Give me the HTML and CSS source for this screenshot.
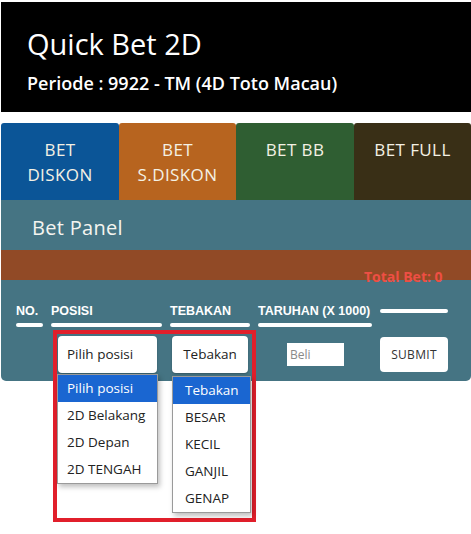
FILE: index.html
```html
<!DOCTYPE html>
<html lang="id">
<head>
<meta charset="utf-8">
<title>Quick Bet 2D</title>
<link rel="stylesheet" href="styles.css">
</head>
<body>
<div class="page">
  <header class="header">
    <h1 class="title">Quick Bet 2D</h1>
    <p class="periode">Periode : 9922 - TM (4D Toto Macau)</p>
  </header>

  <nav class="tabs">
    <div class="tab tab-blue">BET<br>DISKON</div>
    <div class="tab tab-orange">BET<br>S.DISKON</div>
    <div class="tab tab-green">BET BB</div>
    <div class="tab tab-dark">BET FULL</div>
  </nav>

  <section class="panel">
    <div class="panel-title">Bet Panel</div>
    <div class="panel-bar"></div>
    <div class="total">Total Bet: 0</div>
    <div class="bet-grid">
      <div class="th">NO.</div>
      <div class="th">POSISI</div>
      <div class="th">TEBAKAN</div>
      <div class="th">TARUHAN (X 1000)</div>
      <div class="th"></div>

      <div class="td"></div>
      <div class="td"><div class="select select-posisi">Pilih posisi</div></div>
      <div class="td"><div class="select select-tebakan">Tebakan</div></div>
      <div class="td"><div class="input-beli">Beli</div></div>
      <div class="td td-left"><div class="btn-submit">SUBMIT</div></div>
    </div>
  </section>

  <div class="mark"></div>

  <ul class="dropdown dd-posisi">
    <li class="active">Pilih posisi</li>
    <li>2D Belakang</li>
    <li>2D Depan</li>
    <li>2D TENGAH</li>
  </ul>

  <ul class="dropdown dd-tebakan">
    <li class="active">Tebakan</li>
    <li>BESAR</li>
    <li>KECIL</li>
    <li>GANJIL</li>
    <li>GENAP</li>
  </ul>
</div>
</body>
</html>
```

FILE: styles.css
```css
* { box-sizing: border-box; }

html, body {
  margin: 0;
  padding: 0;
  background: #ffffff;
}

body {
  font-family: "Open Sans", Lato, sans-serif;
  color: #222;
}

.page {
  position: relative;
  width: 471px;
  height: 534px;
  padding: 2px 0 0 1px;
}

.header {
  background: #000000;
  height: 110px;
  padding: 25px 0 0 26px;
  color: #ffffff;
}

.title {
  margin: 0;
  font-size: 29px;
  line-height: 34px;
  font-weight: 400;
}

.periode {
  margin: 11px 0 0 0;
  font-size: 18px;
  line-height: 22px;
  font-weight: 600;
}

.tabs {
  margin-top: 11px;
  display: grid;
  grid-template-columns: 118px 117px 118px 117px;
  height: 77px;
}

.tab {
  border-radius: 3px 3px 0 0;
  text-align: center;
  color: #f4f1e4;
  font-size: 17px;
  line-height: 25px;
  letter-spacing: 0.4px;
  padding-top: 14px;
}

.tab-blue { background: #0b5597; }
.tab-orange { background: #b7641f; }
.tab-green { background: #2f5e32; }
.tab-dark { background: #392f16; }

.panel {
  position: relative;
  background: #457483;
  border-radius: 0 0 5px 5px;
  padding-bottom: 8px;
}

.panel-title {
  height: 50px;
  padding: 15px 0 0 31px;
  font-size: 20px;
  line-height: 26px;
  font-weight: 500;
  letter-spacing: 0.3px;
  color: #f4f4f0;
}

.panel-bar {
  height: 30px;
  background: #914a26;
}

.total {
  position: absolute;
  left: 363px;
  top: 67px;
  font-size: 14px;
  line-height: 20px;
  font-weight: 700;
  color: #ee4f44;
}

.bet-grid {
  display: grid;
  grid-template-columns: 27px 111px 80px 114px 68px;
  column-gap: 8px;
  padding: 24px 0 0 15px;
  row-gap: 9px;
}

.th {
  font-family: "Liberation Sans", Arial, sans-serif;
  font-weight: 700;
  font-size: 12.5px;
  line-height: 14px;
  color: #ffffff;
  white-space: nowrap;
}

.th::after {
  content: "";
  display: block;
  margin-top: 5px;
  height: 4px;
  border-radius: 2px;
  background: #ffffff;
}

.td {
  display: flex;
  justify-content: center;
  align-items: center;
  height: 37px;
}

.td-left {
  justify-content: flex-start;
}

.select {
  height: 37px;
  background: #ffffff;
  border-radius: 4px;
  box-shadow: 0 1px 2px rgba(0, 0, 0, 0.25);
  font-size: 13.5px;
  line-height: 37px;
  color: #222;
  padding-left: 9px;
  white-space: nowrap;
}

.select-posisi { width: 99px; margin-left: 2px; }
.select-tebakan { width: 76px; text-align: center; padding-left: 0; }

.input-beli {
  width: 57px;
  height: 23px;
  background: #ffffff;
  font-size: 12px;
  line-height: 23px;
  color: #8a8a8a;
  padding-left: 3px;
  margin-left: 1px;
}

.btn-submit {
  width: 72px;
  height: 35px;
  background: #ffffff;
  border-radius: 4px;
  font-size: 12px;
  line-height: 35px;
  text-align: center;
  letter-spacing: 0.3px;
  color: #333;
}

.mark {
  position: absolute;
  left: 53px;
  top: 330px;
  width: 203px;
  height: 192px;
  border: 4px solid #e11f2b;
}

.dropdown {
  position: absolute;
  margin: 0;
  padding: 0;
  list-style: none;
  background: #ffffff;
  border: 1px solid #9a9a9a;
  box-shadow: 2px 3px 5px rgba(0, 0, 0, 0.25);
  font-size: 13.5px;
  color: #222;
  white-space: nowrap;
}

.dropdown li {
  height: 27px;
  line-height: 27px;
}

.dropdown li.active {
  background: #1a66d1;
  color: #ffffff;
}

.dd-posisi {
  left: 57px;
  top: 374px;
  width: 101px;
}

.dd-posisi li { padding-left: 9px; }

.dd-tebakan {
  left: 172px;
  top: 376px;
  width: 79px;
}

.dd-tebakan li { padding-left: 12px; }
```
